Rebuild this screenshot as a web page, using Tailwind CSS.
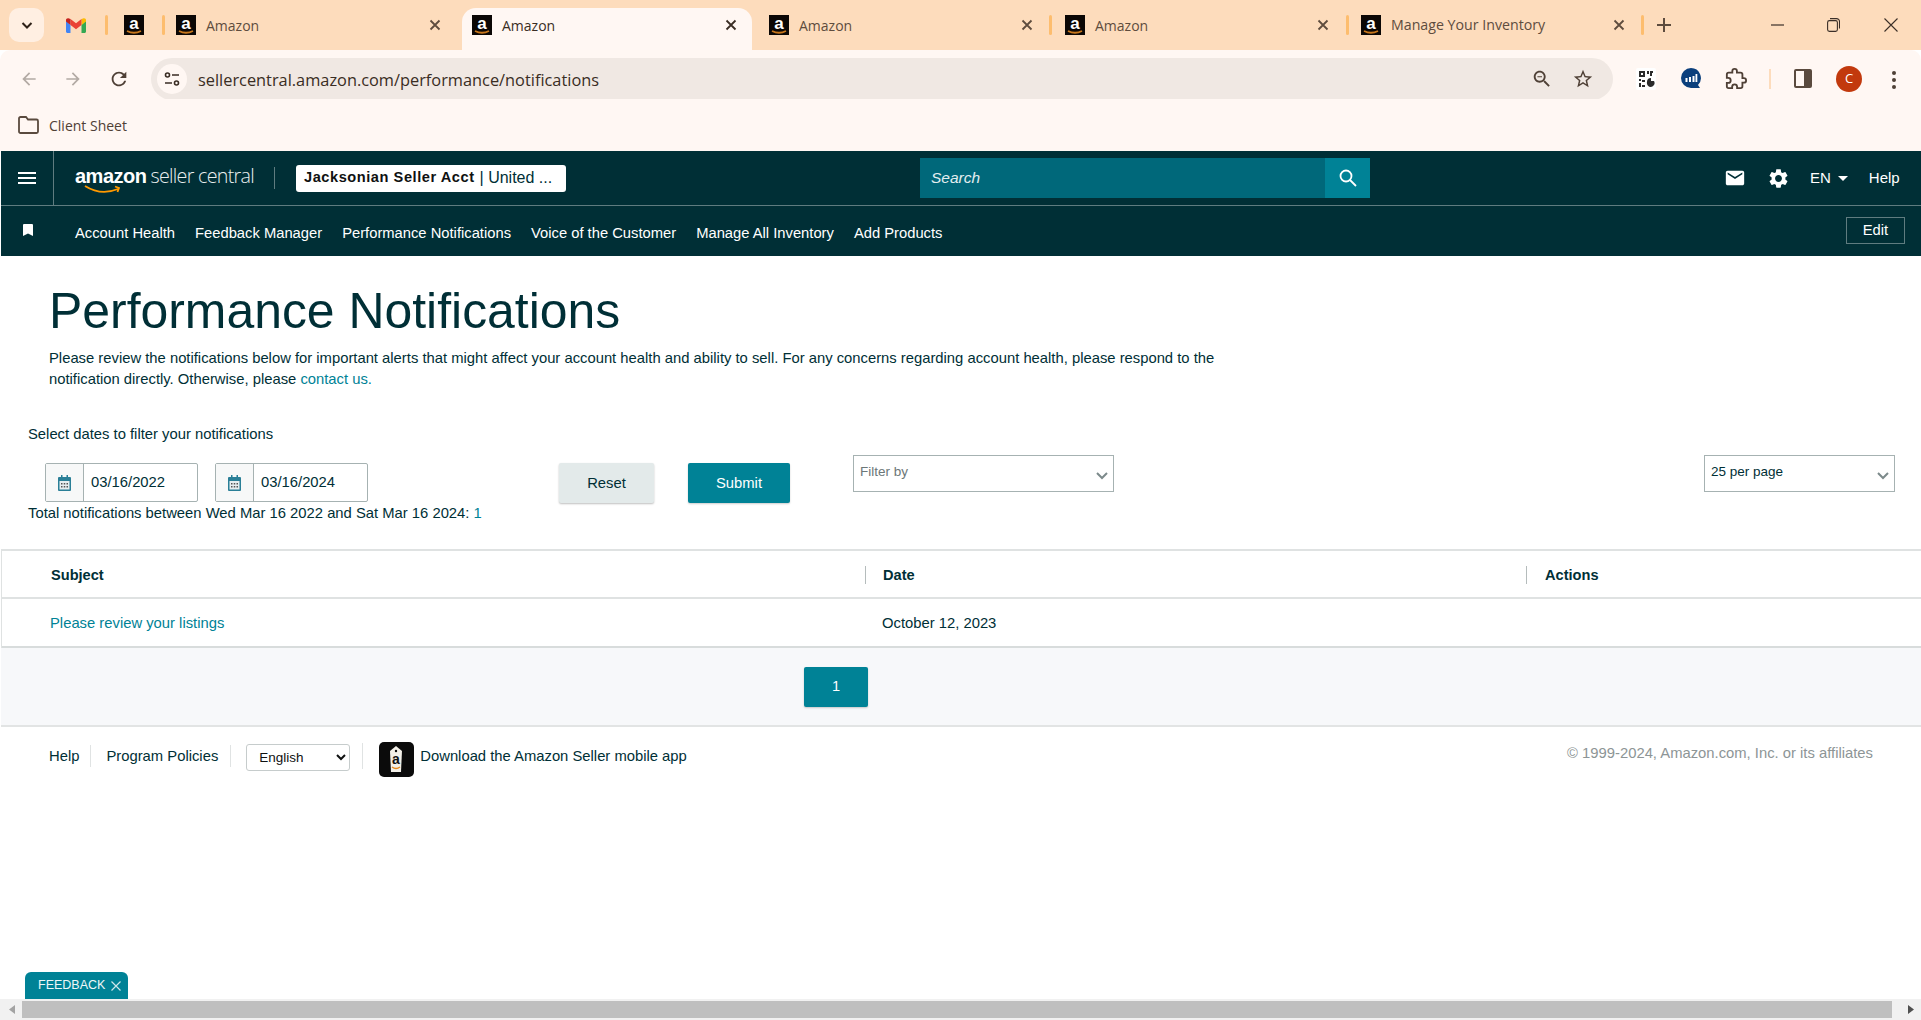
<!DOCTYPE html>
<html lang="en">
  <head>
    <meta charset="UTF-8" />
    <title>Amazon</title>
    <script src="https://cdn.jsdelivr.net/npm/@tailwindcss/browser@4"></script>
  </head>
  <body class="bg-white text-[#002f36] font-['Liberation_Sans',Arial,sans-serif]">
    <div class="relative h-[1020px] w-[1921px] overflow-hidden flex flex-col">
      <!-- Tab strip -->
      <div class="h-[50px] bg-[#fddcbc] flex items-start pl-[9px] text-[14px] text-[#5e4c3e] font-['Open_Sans',sans-serif] shrink-0">
        <div class="mt-[8px] w-[35px] h-[34px] rounded-[10px] bg-[#ffefe2] flex items-center justify-center shrink-0">
          <svg class="w-[14px] h-[14px]" viewBox="0 0 14 14" fill="none" stroke="#2e2118" stroke-width="2"><path d="M2.500 5l4.500 4.500L11.500 5" /></svg>
        </div>
        <!-- pinned tabs -->
        <div class="ml-[22px] mt-[18px] w-[20px] h-[14px] shrink-0">
          <svg class="w-[20px] h-[15px]" viewBox="0 0 20 15"><path d="M0 2.500V13.500C0 14.300.7 15 1.500 15H4.500V7L0 2.500z" fill="#4285f4"/><path d="M15.500 15H18.500C19.300 15 20 14.300 20 13.500V2.500L15.500 7z" fill="#34a853"/><path d="M15.500 1V7L20 3.500V2C20 .5 18.300-.4 17 .5z" fill="#fbbc04"/><path d="M4.500 7V1L10 5.200 15.500 1V7L10 11.200z" fill="#ea4335"/><path d="M0 2V3.500L4.500 7V1L3 .5C1.700-.4 0 .5 0 2z" fill="#c5221f"/></svg>
        </div>
        <div class="ml-[19px] mt-[15px] w-[3px] h-[20px] rounded bg-[#fdbd6e] shrink-0"></div>
        <svg class="ml-[16px] mt-[15px] w-[20px] h-[20px] shrink-0" viewBox="0 0 20 20"><rect width="20" height="20" fill="#0b0705"/><text x="10" y="14" text-anchor="middle" font-family="Liberation Sans" font-weight="700" font-size="17" fill="#fff">a</text><path d="M3 16q7 3.500 14 0" fill="none" stroke="#c8771c" stroke-width="1.800"/></svg>
        <div class="ml-[18px] mt-[15px] w-[3px] h-[20px] rounded bg-[#fdbd6e] shrink-0"></div>
        <!-- Amazon tab -->
        <div class="w-[297px] h-[50px] flex items-center pl-[11px] shrink-0">
          <svg class="w-[20px] h-[20px] shrink-0" viewBox="0 0 20 20"><rect width="20" height="20" fill="#0b0705"/><text x="10" y="14" text-anchor="middle" font-family="Liberation Sans" font-weight="700" font-size="17" fill="#fff">a</text><path d="M3 16q7 3.500 14 0" fill="none" stroke="#c8771c" stroke-width="1.800"/></svg>
          <span class="ml-[10px] w-[223px] shrink-0">Amazon</span>
          <svg class="w-[12px] h-[12px] shrink-0" viewBox="0 0 12 12" stroke="#5e4c3e" stroke-width="1.800"><path d="M1.500 1.500l9 9M10.500 1.500l-9 9"/></svg>
        </div>
        <!-- Active tab -->
        <div class="mt-[8px] w-[290px] h-[42px] pb-[8px] bg-[#fff7f3] rounded-t-[14px] flex items-center pl-[10px] shrink-0 text-[#3a2d24]">
          <svg class="w-[20px] h-[20px] shrink-0" viewBox="0 0 20 20"><rect width="20" height="20" fill="#0b0705"/><text x="10" y="14" text-anchor="middle" font-family="Liberation Sans" font-weight="700" font-size="17" fill="#fff">a</text><path d="M3 16q7 3.500 14 0" fill="none" stroke="#c8771c" stroke-width="1.800"/></svg>
          <span class="ml-[10px] w-[223px] shrink-0">Amazon</span>
          <svg class="w-[12px] h-[12px] shrink-0" viewBox="0 0 12 12" stroke="#3a2d24" stroke-width="1.800"><path d="M1.500 1.500l9 9M10.500 1.500l-9 9"/></svg>
        </div>
        <div class="w-[300px] h-[50px] flex items-center pl-[17px] shrink-0">
          <svg class="w-[20px] h-[20px] shrink-0" viewBox="0 0 20 20"><rect width="20" height="20" fill="#0b0705"/><text x="10" y="14" text-anchor="middle" font-family="Liberation Sans" font-weight="700" font-size="17" fill="#fff">a</text><path d="M3 16q7 3.500 14 0" fill="none" stroke="#c8771c" stroke-width="1.800"/></svg>
          <span class="ml-[10px] w-[222px] shrink-0">Amazon</span>
          <svg class="w-[12px] h-[12px] shrink-0" viewBox="0 0 12 12" stroke="#5e4c3e" stroke-width="1.800"><path d="M1.500 1.500l9 9M10.500 1.500l-9 9"/></svg>
          <div class="ml-[16px] w-[3px] h-[20px] rounded bg-[#fdbd6e] shrink-0"></div>
        </div>
        <div class="w-[297px] h-[50px] flex items-center pl-[13px] shrink-0">
          <svg class="w-[20px] h-[20px] shrink-0" viewBox="0 0 20 20"><rect width="20" height="20" fill="#0b0705"/><text x="10" y="14" text-anchor="middle" font-family="Liberation Sans" font-weight="700" font-size="17" fill="#fff">a</text><path d="M3 16q7 3.500 14 0" fill="none" stroke="#c8771c" stroke-width="1.800"/></svg>
          <span class="ml-[10px] w-[222px] shrink-0">Amazon</span>
          <svg class="w-[12px] h-[12px] shrink-0" viewBox="0 0 12 12" stroke="#5e4c3e" stroke-width="1.800"><path d="M1.500 1.500l9 9M10.500 1.500l-9 9"/></svg>
          <div class="ml-[17px] w-[3px] h-[20px] rounded bg-[#fdbd6e] shrink-0"></div>
        </div>
        <div class="w-[295px] h-[50px] flex items-center pl-[12px] shrink-0">
          <svg class="w-[20px] h-[20px] shrink-0" viewBox="0 0 20 20"><rect width="20" height="20" fill="#0b0705"/><text x="10" y="14" text-anchor="middle" font-family="Liberation Sans" font-weight="700" font-size="17" fill="#fff">a</text><path d="M3 16q7 3.500 14 0" fill="none" stroke="#c8771c" stroke-width="1.800"/></svg>
          <span class="ml-[10px] w-[222px] shrink-0 text-[14.200px]">Manage Your Inventory</span>
          <svg class="w-[12px] h-[12px] shrink-0" viewBox="0 0 12 12" stroke="#5e4c3e" stroke-width="1.800"><path d="M1.500 1.500l9 9M10.500 1.500l-9 9"/></svg>
          <div class="ml-[16px] w-[3px] h-[20px] rounded bg-[#fdbd6e] shrink-0"></div>
        </div>
        <svg class="ml-[13px] mt-[18px] w-[14px] h-[14px] shrink-0" viewBox="0 0 14 14" stroke="#5e4c3e" stroke-width="2"><path d="M7 0v14M0 7h14"/></svg>
        <!-- window controls -->
        <svg class="ml-[100px] mt-[24px] w-[13px] h-[2px] shrink-0" viewBox="0 0 13 2"><path d="M0 1h13" stroke="#3b2f28" stroke-width="1.200"/></svg>
        <svg class="ml-[43px] mt-[18px] w-[13px] h-[14px] shrink-0" viewBox="0 0 13 14" fill="none" stroke="#3b2f28" stroke-width="1.100"><rect x=".6" y="2.600" width="9.800" height="10.800" rx="1.800"/><path d="M3 .6h6.500a3 3 0 0 1 3 3v7"/></svg>
        <svg class="ml-[44px] mt-[18px] w-[14px] h-[14px] shrink-0" viewBox="0 0 14 14" stroke="#3b2f28" stroke-width="1.100"><path d="M.5.500l13 13M13.500.500l-13 13"/></svg>
      </div>

      <!-- Address bar -->
      <div class="h-[50px] bg-[#fff7f3] flex items-start shrink-0 rounded-t-[10px] -mb-px">
        <svg class="ml-[19px] mt-[19px] w-[20px] h-[20px] shrink-0" viewBox="0 0 24 24" fill="#b3aaa4"><path d="M20 11H7.830l5.590-5.590L12 4l-8 8 8 8 1.410-1.410L7.830 13H20v-2z"/></svg>
        <svg class="ml-[24px] mt-[19px] w-[20px] h-[20px] shrink-0" viewBox="0 0 24 24" fill="#b3aaa4"><path d="M12 4l-1.410 1.410L16.170 11H4v2h12.170l-5.580 5.590L12 20l8-8z"/></svg>
        <svg class="ml-[25px] mt-[18px] w-[22px] h-[22px] shrink-0" viewBox="0 0 24 24" fill="#4f4036"><path d="M17.650 6.350C16.200 4.900 14.210 4 12 4c-4.420 0-7.990 3.580-7.990 8s3.570 8 7.990 8c3.730 0 6.840-2.550 7.730-6h-2.080c-.82 2.330-3.040 4-5.650 4-3.310 0-6-2.690-6-6s2.690-6 6-6c1.660 0 3.140.69 4.220 1.780L13 11h7V4l-2.350 2.350z"/></svg>
        <div class="ml-[21px] mt-[8px] w-[1462px] h-[42px] rounded-full bg-[#f0e8e3] flex items-center pl-[6px] shrink-0">
          <div class="w-[30px] h-[30px] rounded-full bg-[#fff7f3] flex items-center justify-center shrink-0">
            <svg class="w-[16px] h-[16px]" viewBox="0 0 16 16" fill="none" stroke="#3a2d24" stroke-width="1.600"><circle cx="3.500" cy="4" r="2"/><path d="M8 4h7M1 12h7"/><circle cx="12.500" cy="12" r="2"/></svg>
          </div>
          <span class="ml-[11px] mt-[2px] w-[1333px] shrink-0 text-[16.350px] text-[#3a2d24] font-['Open_Sans',sans-serif]">sellercentral.amazon.com/performance/notifications</span>
          <svg class="w-[22px] h-[22px] shrink-0" viewBox="0 0 24 24" fill="#4f4036"><path d="M15.500 14h-.79l-.28-.27C15.410 12.590 16 11.110 16 9.500 16 5.910 13.090 3 9.500 3S3 5.910 3 9.500 5.910 16 9.500 16c1.610 0 3.090-.59 4.230-1.570l.27.28v.79l5 4.990L20.490 19l-4.990-5zm-6 0C7.010 14 5 11.990 5 9.500S7.010 5 9.500 5 14 7.010 14 9.500 11.990 14 9.500 14zM7 9h5v1H7z"/></svg>
          <svg class="ml-[19px] w-[22px] h-[22px] shrink-0" viewBox="0 0 24 24" fill="#4f4036"><path d="M22 9.240l-7.190-.62L12 2 9.190 8.630 2 9.240l5.460 4.730L5.820 21 12 17.270 18.180 21l-1.630-7.030L22 9.240zM12 15.400l-3.760 2.270 1-4.280-3.320-2.880 4.380-.38L12 6.100l1.710 4.040 4.380.38-3.320 2.880 1 4.280L12 15.400z"/></svg>
        </div>
        <!-- extensions -->
        <svg class="ml-[23px] mt-[18px] w-[20px] h-[22px] shrink-0" viewBox="0 0 20 22"><rect width="20" height="22" rx="2" fill="#fff"/><g fill="#2b2b2b"><path d="M3 3h6v6H3zM5 5v2h2V5z" fill-rule="evenodd"/><path d="M11 3h2v3h-2zM14 3h3v2h-1v3h-2zM3 11h2v2H3zM6 12h3v2H6zM3 15h2v4H3zM6 17h3v2H6z"/><path d="M11 14a4 4 0 0 0 4 5 4 4 0 0 0 3-6h-3v-3a4 4 0 0 0-4 4z"/></g></svg>
        <svg class="ml-[25px] mt-[18px] w-[20px] h-[23px] shrink-0" viewBox="0 0 20 23"><path d="M10 0a10 10 0 0 0 0 20h9l-2-3a10 10 0 0 0-7-17z" fill="#0b3f7c"/><g fill="#fff"><rect x="4.500" y="10" width="2" height="4"/><rect x="8" y="9" width="2" height="5"/><rect x="11.500" y="8" width="2" height="6"/><rect x="14.500" y="6" width="1.800" height="8"/></g></svg>
        <svg class="ml-[24px] mt-[18px] w-[22px] h-[22px] shrink-0" viewBox="0 0 24 24" fill="none" stroke="#4f4036" stroke-width="2"><path d="M20.500 11H19V7c0-1.100-.9-2-2-2h-4V3.500C13 2.120 11.880 1 10.500 1S8 2.120 8 3.500V5H4c-1.100 0-1.990.9-1.990 2v3.800H3.500c1.490 0 2.700 1.210 2.700 2.700s-1.210 2.700-2.700 2.700H2V20c0 1.100.9 2 2 2h3.800v-1.500c0-1.490 1.210-2.700 2.700-2.700s2.700 1.210 2.700 2.700V22H17c1.100 0 2-.9 2-2v-4h1.500c1.380 0 2.500-1.120 2.500-2.500S21.880 11 20.500 11z"/></svg>
        <div class="ml-[22px] mt-[19px] w-[2px] h-[20px] bg-[#fddcbc] shrink-0"></div>
        <svg class="ml-[23px] mt-[19px] w-[18px] h-[19px] shrink-0" viewBox="0 0 18 19"><rect width="18" height="19" rx="2" fill="#5a4a3e"/><rect x="2" y="2" width="8" height="15" fill="#fff7f3"/></svg>
        <div class="ml-[24px] mt-[16px] w-[26px] h-[26px] rounded-full bg-[#c2390d] text-white text-[13px] flex items-center justify-center shrink-0 font-['Open_Sans',sans-serif]">C</div>
        <svg class="ml-[29px] mt-[20px] w-[6px] h-[20px] shrink-0" viewBox="0 0 6 20" fill="#4f4036"><circle cx="3" cy="3" r="2"/><circle cx="3" cy="10" r="2"/><circle cx="3" cy="17" r="2"/></svg>
      </div>

      <!-- Bookmarks bar -->
      <div class="h-[52px] bg-[#fff7f3] flex items-start pl-[18px] pt-[17px] shrink-0">
        <svg class="w-[21px] h-[18px]" viewBox="0 0 21 18" fill="none" stroke="#5a4a3e" stroke-width="1.800"><path d="M2.500 1h5.500l2 2.500h8.500a1.500 1.500 0 0 1 1.500 1.500v10.500a1.500 1.500 0 0 1-1.500 1.500h-16A1.500 1.500 0 0 1 1 15.500v-13A1.500 1.500 0 0 1 2.500 1z"/></svg>
        <span class="ml-[10px] text-[14px] leading-[20px] text-[#4f4036] font-['Open_Sans',sans-serif]">Client Sheet</span>
      </div>

      <!-- Seller Central nav -->
      <div class="ml-px bg-[#002f36] text-white shrink-0">
        <div class="h-[55px] flex items-center border-b border-[#5f7c80]">
          <div class="w-[53px] h-full border-r border-[#5f7c80] flex items-center justify-center shrink-0">
            <svg class="w-[18px] h-[14px]" viewBox="0 0 18 14" fill="#fff"><path d="M0 1h18v2H0zM0 6h18v2H0zM0 11h18v2H0z"/></svg>
          </div>
          <!-- logo -->
          <div class="relative ml-[21px] w-[199px] h-[40px] shrink-0 flex items-center pb-[5px]">
            <span class="text-[20px] font-bold tracking-[-0.5px]">amazon</span>
            <span class="ml-[4px] text-[19.700px] tracking-[-0.7px] font-['Open_Sans',sans-serif] font-light text-[#e9eeee]">seller central</span>
            <svg class="absolute left-[9px] top-[27px] w-[38px] h-[10px]" viewBox="0 0 38 10" fill="none" stroke="#ff9900" stroke-width="1.800"><path d="M1 1q16 10 33 3M31 1.500l4 1.500-1.500 4"/></svg>
          </div>
          <div class="w-px h-[22px] bg-[#5f7c80] shrink-0"></div>
          <div class="ml-[21px] w-[270px] h-[27px] rounded-[3px] bg-white text-[#0f1111] flex items-center pl-[8px] text-[14.600px] shrink-0 whitespace-nowrap overflow-hidden">
            <span class="font-bold tracking-[0.55px]">Jacksonian Seller Acct</span><span class="ml-[5px] text-[16px] text-[#002f36]">| United ...</span>
          </div>
          <div class="ml-[354px] w-[405px] h-[40px] bg-[#00687a] flex items-center pl-[11px] italic text-[15.500px] text-[#e3eef0] shrink-0">Search</div>
          <div class="w-[45px] h-[40px] bg-[#008296] flex items-center justify-center shrink-0">
            <svg class="w-[20px] h-[20px]" viewBox="0 0 20 20" fill="none" stroke="#fff" stroke-width="1.800"><circle cx="8" cy="8" r="5.500"/><path d="M12 12l6 6"/></svg>
          </div>
          <svg class="ml-[354px] w-[22px] h-[22px] shrink-0" viewBox="0 0 24 24" fill="#fff"><path d="M20 4H4c-1.100 0-1.990.9-1.990 2L2 18c0 1.100.9 2 2 2h16c1.100 0 2-.9 2-2V6c0-1.100-.9-2-2-2zm0 4l-8 5-8-5V6l8 5 8-5v2z"/></svg>
          <svg class="ml-[21px] w-[23px] h-[23px] shrink-0" viewBox="0 0 24 24" fill="#fff"><path d="M19.140 12.940c.04-.3.06-.61.06-.94 0-.32-.02-.64-.07-.94l2.030-1.580c.18-.14.23-.41.12-.61l-1.920-3.320c-.12-.22-.37-.29-.59-.22l-2.390.96c-.5-.38-1.030-.7-1.620-.94l-.36-2.540c-.04-.24-.24-.41-.48-.41h-3.840c-.24 0-.43.17-.47.41l-.36 2.540c-.59.24-1.130.57-1.620.94l-2.390-.96c-.22-.08-.47 0-.59.22L2.740 8.870c-.12.21-.08.47.12.61l2.030 1.580c-.05.3-.09.63-.09.94s.02.64.07.94l-2.030 1.580c-.18.14-.23.41-.12.61l1.920 3.320c.12.22.37.29.59.22l2.390-.96c.5.38 1.030.7 1.620.94l.36 2.540c.05.24.24.41.48.41h3.840c.24 0 .44-.17.47-.41l.36-2.540c.59-.24 1.130-.56 1.620-.94l2.390.96c.22.08.47 0 .59-.22l1.920-3.320c.12-.22.07-.47-.12-.61l-2.010-1.580zM12 15.600c-1.980 0-3.600-1.620-3.600-3.600s1.620-3.600 3.600-3.600 3.600 1.620 3.600 3.600-1.620 3.600-3.600 3.600z"/></svg>
          <span class="ml-[20px] text-[15px] shrink-0">EN</span>
          <span class="ml-[7px] w-0 h-0 border-x-[5px] border-x-transparent border-t-[5px] border-t-white shrink-0"></span>
          <span class="ml-[21px] text-[15px] shrink-0">Help</span>
        </div>
        <div class="h-[50px] pt-[2px] flex items-center text-[14.750px]">
          <svg class="ml-[22px] mb-[4px] w-[10px] h-[12px] shrink-0" viewBox="0 0 10 12" fill="#fff"><path d="M1 0h8a1 1 0 0 1 1 1v11L5 9.500 0 12V1a1 1 0 0 1 1-1z"/></svg>
          <div class="ml-[42px] mt-[2px] flex gap-[20px] whitespace-nowrap">
            <span>Account Health</span>
            <span>Feedback Manager</span>
            <span>Performance Notifications</span>
            <span>Voice of the Customer</span>
            <span>Manage All Inventory</span>
            <span>Add Products</span>
          </div>
          <div class="ml-auto mr-[16px] mb-[3px] w-[59px] h-[27px] border border-[#5f7c80] flex items-center justify-center">Edit</div>
        </div>
      </div>

      <!-- Page intro -->
      <div class="pl-[49px] pt-[26px] shrink-0">
        <h1 class="text-[49.900px] leading-[58px] font-normal">Performance Notifications</h1>
        <p class="mt-[8px] w-[1190px] text-[14.800px] leading-[21px]">Please review the notifications below for important alerts that might affect your account health and ability to sell. For any concerns regarding account health, please respond to the notification directly. Otherwise, please <span class="text-[#008296]">contact us.</span></p>
      </div>

      <!-- Filters -->
      <div class="pl-[28px] pr-[26px] h-[159px] shrink-0 pt-[34px] text-[14.800px]">
        <div class="leading-[20px]">Select dates to filter your notifications</div>
        <div class="mt-[11px] flex items-start">
          <div class="w-[531px] shrink-0 pt-[8px]">
            <div class="pl-[17px] flex gap-[17px]">
              <div class="w-[153px] h-[39px] border border-[#a6b2b2] rounded-[2px] flex items-center">
                <div class="w-[38px] h-full bg-[#f7f8f8] border-r border-[#a6b2b2] flex items-center justify-center shrink-0">
                  <svg class="w-[13px] h-[16px]" viewBox="0 0 13 16"><rect y="2" width="13" height="14" rx="1" fill="#2a7f97"/><rect x="1.500" y="6" width="10" height="8.500" fill="#e6eef0"/><path d="M3 0h1.500v3H3zM8.500 0H10v3H8.500z" fill="#2a7f97"/><g fill="#555"><rect x="3" y="8" width="1.500" height="1.500"/><rect x="5.750" y="8" width="1.500" height="1.500"/><rect x="8.500" y="8" width="1.500" height="1.500"/><rect x="3" y="11" width="1.500" height="1.500"/><rect x="5.750" y="11" width="1.500" height="1.500"/><rect x="8.500" y="11" width="1.500" height="1.500"/></g></svg>
                </div>
                <span class="ml-[7px]">03/16/2022</span>
              </div>
              <div class="w-[153px] h-[39px] border border-[#a6b2b2] rounded-[2px] flex items-center">
                <div class="w-[38px] h-full bg-[#f7f8f8] border-r border-[#a6b2b2] flex items-center justify-center shrink-0">
                  <svg class="w-[13px] h-[16px]" viewBox="0 0 13 16"><rect y="2" width="13" height="14" rx="1" fill="#2a7f97"/><rect x="1.500" y="6" width="10" height="8.500" fill="#e6eef0"/><path d="M3 0h1.500v3H3zM8.500 0H10v3H8.500z" fill="#2a7f97"/><g fill="#555"><rect x="3" y="8" width="1.500" height="1.500"/><rect x="5.750" y="8" width="1.500" height="1.500"/><rect x="8.500" y="8" width="1.500" height="1.500"/><rect x="3" y="11" width="1.500" height="1.500"/><rect x="5.750" y="11" width="1.500" height="1.500"/><rect x="8.500" y="11" width="1.500" height="1.500"/></g></svg>
                </div>
                <span class="ml-[7px]">03/16/2024</span>
              </div>
            </div>
            <div class="mt-[1px] leading-[20px]">Total notifications between Wed Mar 16 2022 and Sat Mar 16 2024: <span class="text-[#008296]">1</span></div>
          </div>
          <div class="mt-[8px] w-[95px] h-[40px] rounded-[2px] bg-[#e3eaea] shadow-[0_1px_2px_rgba(0,0,0,0.25)] flex items-center justify-center shrink-0">Reset</div>
          <div class="ml-[34px] mt-[8px] w-[102px] h-[40px] rounded-[2px] bg-[#008296] text-white shadow-[0_1px_2px_rgba(0,0,0,0.2)] flex items-center justify-center shrink-0">Submit</div>
          <div class="ml-[63px] w-[261px] h-[37px] border border-[#a6b2b2] flex items-center justify-between pl-[6px] pr-[5px] text-[13.500px] text-[#6c7778] shrink-0">
            <span class="mb-[2px]">Filter by</span>
            <svg class="mt-[4px] w-[12px] h-[8px]" viewBox="0 0 12 8" fill="none" stroke="#7c8a8b" stroke-width="2"><path d="M1 1l5 5 5-5"/></svg>
          </div>
          <div class="ml-auto w-[191px] h-[37px] border border-[#a6b2b2] flex items-center justify-between pl-[6px] pr-[5px] text-[13.500px] text-[#002f36] shrink-0">
            <span class="mb-[2px]">25 per page</span>
            <svg class="mt-[4px] w-[12px] h-[8px]" viewBox="0 0 12 8" fill="none" stroke="#7c8a8b" stroke-width="2"><path d="M1 1l5 5 5-5"/></svg>
          </div>
        </div>
      </div>

      <!-- Notifications table -->
      <div class="ml-px border-l border-t-2 border-[#dfe2e2] text-[14.600px] shrink-0">
        <div class="h-[48px] pt-[1px] flex items-center font-bold border-b-2 border-[#dfe2e2]">
          <div class="w-[863px] pl-[49px] leading-[18px] shrink-0">Subject</div>
          <div class="w-[661px] border-l border-[#b5bcbc] pl-[17px] leading-[18px] shrink-0">Date</div>
          <div class="border-l border-[#b5bcbc] pl-[18px] leading-[18px]">Actions</div>
        </div>
        <div class="h-[49px] pt-[1px] flex items-center border-b-2 border-[#d8dcdc] text-[14.800px]">
          <div class="w-[863px] pl-[48px] text-[#008296] shrink-0">Please review your listings</div>
          <div class="pl-[17px]">October 12, 2023</div>
        </div>
      </div>

      <!-- Pagination -->
      <div class="ml-px h-[79px] bg-[#f7f8fa] border-b-2 border-[#e2e4e4] flex justify-center items-start pt-[19px] pr-[250px] shrink-0">
        <div class="w-[64px] h-[40px] rounded-[2px] bg-[#008296] text-white text-[14.600px] shadow-[0_1px_2px_rgba(0,0,0,0.2)] flex items-center justify-center">1</div>
      </div>

      <!-- Footer -->
      <div class="pl-[49px] pr-[48px] pt-[15px] flex items-start text-[14.800px] shrink-0">
        <div class="mt-[3px] pr-[11px] h-[22px] leading-[22px] border-r border-[#e0e3e3] shrink-0">Help</div>
        <div class="mt-[3px] pl-[15px] pr-[12px] h-[22px] leading-[22px] border-r border-[#e0e3e3] shrink-0">Program Policies</div>
        <select class="ml-[15px] mt-[2px] w-[104px] h-[27px] pl-[8px] border border-[#c6cccc] rounded-[3px] bg-white text-[13.500px] text-[#0f1111] shrink-0"><option>English</option></select>
        <div class="ml-[12px] mt-[1px] w-px h-[26px] bg-[#e0e3e3] shrink-0"></div>
        <svg class="ml-[16px] w-[35px] h-[35px] shrink-0" viewBox="0 0 35 35"><rect width="35" height="35" rx="5" fill="#0b0b0b"/><path d="M11 9l6-5 6 5-1 21H12z" fill="#f3f0e8"/><circle cx="17" cy="9" r="1.200" fill="#0b0b0b"/><text x="17" y="22" text-anchor="middle" font-family="Liberation Sans" font-weight="700" font-size="14" fill="#111">a</text><path d="M13 25q4 3 8 0" fill="none" stroke="#e8891c" stroke-width="1.300"/></svg>
        <div class="ml-[6px] mt-[3px] leading-[22px]">Download the Amazon Seller mobile app</div>
        <div class="ml-auto leading-[22px] text-[#8d9596]">© 1999-2024, Amazon.com, Inc. or its affiliates</div>
      </div>

      <!-- Horizontal scrollbar -->
      <div class="mt-auto h-[21px] bg-[#f1f1f1] flex items-center shrink-0">
        <svg class="ml-[9px] w-[6px] h-[9px] shrink-0" viewBox="0 0 6 9" fill="#a3a3a3"><path d="M6 0v9L0 4.500z"/></svg>
        <div class="ml-[7px] w-[1870px] h-[17px] bg-[#bfbfbf] shrink-0"></div>
        <svg class="ml-[16px] w-[6px] h-[9px] shrink-0" viewBox="0 0 6 9" fill="#505050"><path d="M0 0v9l6-4.500z"/></svg>
      </div>

      <!-- Feedback tab -->
      <div class="absolute left-[25px] bottom-[21px] w-[103px] h-[27px] rounded-t-[6px] bg-[#008296] text-[#eef7f8] text-[12.500px] flex items-center pl-[13px]">
        FEEDBACK
        <svg class="ml-[6px] w-[10px] h-[10px]" viewBox="0 0 10 10" stroke="#cfe6ea" stroke-width="1.200"><path d="M.5.500l9 9M9.500.500l-9 9"/></svg>
      </div>
    </div>
  </body>
</html>
